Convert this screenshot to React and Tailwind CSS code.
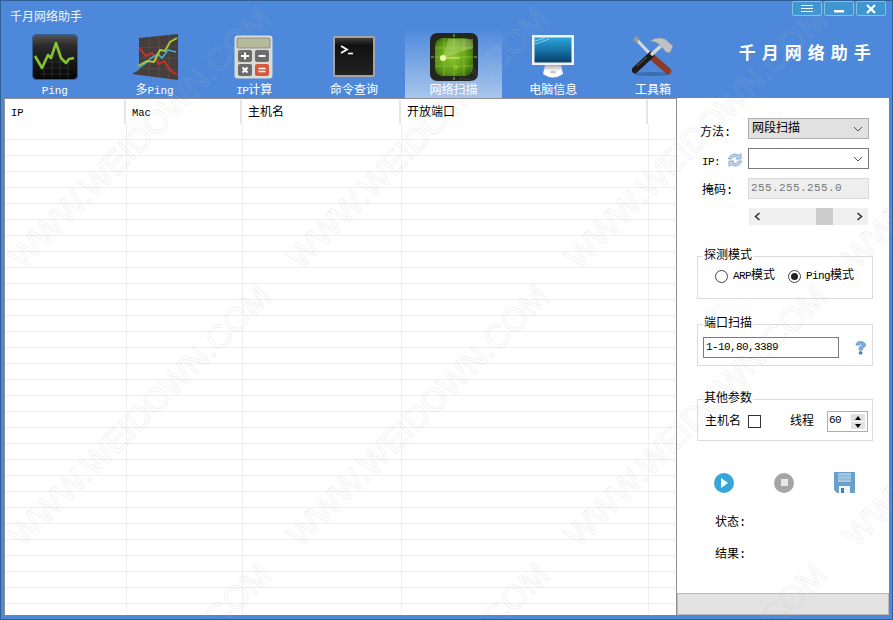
const ui = { fontFamily: '"Liberation Mono","Noto Sans CJK SC",monospace' }

function L({ children }){
  return <span className="text-[11px] tracking-[-0.6px]">{children}</span>
}

function PingIcon(){
  return (
    <svg width="46" height="46" viewBox="0 0 46 46">
      <defs>
        <linearGradient id="pg" x1="0" y1="0" x2="0" y2="1"><stop offset="0" stopColor="#555" /><stop offset="0.25" stopColor="#2a2a2a" /><stop offset="1" stopColor="#050505" /></linearGradient>
      </defs>
      <rect x="0.5" y="0.5" width="45" height="45" rx="4" fill="url(#pg)" stroke="#2f5f95" />
      <path d="M8 28H38M8 34H38M8 40H38M12 24V44M20 24V44M28 24V44M36 24V44" stroke="#3a3a3a" strokeWidth="0.6" />
      <path d="M3 22 L10 34 L16 21 L19 24 L24 9 L29 24 L34 29 L37 25 L42 24" fill="none" stroke="#86c232" strokeWidth="2.6" strokeLinejoin="round" />
    </svg>
  )
}

function MultiPingIcon(){
  return (
    <svg width="46" height="46" viewBox="0 0 46 46">
      <path d="M7 4 L46 0 V46 L0 40 L7 36Z" fill="#463e3b" />
      <path d="M7 14L46 12M7 24L46 24M7 34L46 36M17 4V42M27 3V43M37 1V45" stroke="#5d5450" strokeWidth="0.7" />
      <path d="M7 14 L14 22 L20 19 L27 30 L32 27 L38 36 L45 41" fill="none" stroke="#c9302c" strokeWidth="2" />
      <path d="M7 34 L14 29 L19 24 L26 20 L30 24 L36 16 L44 18" fill="none" stroke="#3fb6d6" strokeWidth="1.5" />
      <path d="M6 32 L15 27 L22 28 L28 16 L33 17 L38 8 L45 4" fill="none" stroke="#a3c93a" strokeWidth="2" />
    </svg>
  )
}

function CalcIcon(){
  return (
    <svg width="40" height="44" viewBox="0 0 40 44">
      <rect x="0.5" y="0.5" width="38" height="43" rx="3" fill="#d9dcd6" />
      <rect x="3" y="3" width="33" height="10" rx="1" fill="#b5bb9b" stroke="#777" strokeWidth="0.7" />
      <rect x="4" y="15" width="14" height="12" rx="2" fill="#6c6c6c" />
      <rect x="21" y="15" width="14" height="12" rx="2" fill="#6c6c6c" />
      <rect x="4" y="29" width="14" height="12" rx="2" fill="#6c6c6c" />
      <rect x="21" y="29" width="14" height="12" rx="2" fill="#d9583c" />
      <path d="M7 21H15M11 17.500V24.500M24.500 21H31.500M8.500 32.500L13.500 37.500M13.500 32.500L8.500 37.500" stroke="#fff" strokeWidth="2" />
      <path d="M24.500 33.500H31.500M24.500 36.500H31.500" stroke="#fff" strokeWidth="1.500" />
    </svg>
  )
}

function TermIcon(){
  return (
    <svg width="42" height="41" viewBox="0 0 42 41">
      <defs>
        <linearGradient id="tg" x1="0" y1="0" x2="0" y2="1"><stop offset="0" stopColor="#3c3c3c" /><stop offset="0.2" stopColor="#111" /><stop offset="1" stopColor="#222" /></linearGradient>
      </defs>
      <rect x="0" y="0" width="42" height="41" rx="2" fill="#a7a29b" />
      <rect x="2" y="2" width="38" height="37" fill="url(#tg)" />
      <path d="M8 10L14 13.500L8 17" fill="none" stroke="#fff" strokeWidth="1.800" />
      <path d="M15 17.500H20" stroke="#fff" strokeWidth="1.600" />
    </svg>
  )
}

function RadarIcon(){
  return (
    <svg width="48" height="48" viewBox="0 0 48 48">
      <defs>
        <radialGradient id="rg" cx="0.45" cy="0.5" r="0.7"><stop offset="0" stopColor="#8cc62c" /><stop offset="0.6" stopColor="#5d9a16" /><stop offset="1" stopColor="#2a5208" /></radialGradient>
      </defs>
      <rect x="0" y="0" width="48" height="48" rx="7" fill="#24261f" />
      <rect x="5" y="5" width="38" height="38" rx="8" fill="url(#rg)" />
      <path d="M5 15H43M5 24H43M5 33H43M14 5V43M24 5V43M34 5V43" stroke="#9ccb3c" strokeWidth="0.6" />
      <path d="M13 25L43 15V6H18Z" fill="#d5e6a0" opacity="0.35" />
      <path d="M13 25H30" stroke="#d9f08a" strokeWidth="1" />
      <circle cx="13" cy="25" r="3" fill="#eefaa8" />
      <circle cx="26" cy="34" r="2" fill="#8ecb2a" />
      <circle cx="22" cy="12" r="1.500" fill="#8ecb2a" />
      <path d="M24 1V4M24 44V47M1 24H4M44 24H47" stroke="#5c9a1c" strokeWidth="1.500" />
    </svg>
  )
}

function MonitorIcon(){
  return (
    <svg width="44" height="44" viewBox="0 0 44 44">
      <defs>
        <linearGradient id="mg" x1="0" y1="0" x2="0" y2="1"><stop offset="0" stopColor="#2ba6de" /><stop offset="1" stopColor="#07406f" /></linearGradient>
        <linearGradient id="sg" x1="0" y1="0" x2="0" y2="1"><stop offset="0" stopColor="#aaa" /><stop offset="0.5" stopColor="#fff" /></linearGradient>
      </defs>
      <rect x="1" y="0" width="42" height="30" fill="#f1f3f4" />
      <rect x="3.500" y="2.500" width="37" height="25" fill="url(#mg)" />
      <path d="M4 6L14 3M4 9L18 4" stroke="#a8dcf3" strokeWidth="0.8" />
      <path d="M14 30H30L32 39Q22 46 12 39Z" fill="url(#sg)" />
      <ellipse cx="22" cy="37" rx="3" ry="1.500" fill="#ccc" />
    </svg>
  )
}

function ToolsIcon(){
  return (
    <svg width="42" height="42" viewBox="0 0 42 42" fill="none">
      <ellipse cx="20" cy="38" rx="18" ry="2" fill="#2b4f80" opacity="0.5" />
      <path d="M4 3L19 19" stroke="#d4d7d9" strokeWidth="3.200" />
      <path d="M1 4L4 0L7 3L5 7Z" fill="#9a9d9f" />
      <path d="M20 21L36 35" stroke="#8c3b2a" strokeWidth="6.500" strokeLinecap="round" />
      <path d="M19 19L3 34" stroke="#1c1c1c" strokeWidth="6.500" strokeLinecap="round" />
      <path d="M15 21L5 30" stroke="#666" strokeWidth="1" />
      <path d="M19 19L30 9" stroke="#d2d5d7" strokeWidth="3.600" />
      <path d="M18 5Q25 0 33 3L41 10L38 17L34 16L29 10Q24 5 18 5Z" fill="#bfc2c4" stroke="#8a8a8a" strokeWidth="0.5" />
    </svg>
  )
}

function RefreshIcon(){
  return (
    <svg width="16" height="16" viewBox="0 0 16 16" fill="#c3d6ee" stroke="#86a9d6" strokeWidth="1">
      <path d="M1.500 7C2.500 2.500 8 .500 12 3.500L14 1.500V7H9L10.800 5.200C8.500 3.800 5.500 4.500 4.500 7Z" />
      <path d="M14.500 9C13.500 13.500 8 15.500 4 12.500L2 14.500V9H7L5.200 10.800C7.500 12.200 10.500 11.500 11.500 9Z" />
    </svg>
  )
}

function HelpIcon(){
  return (
    <svg width="11" height="14" viewBox="0 0 11 14">
      <path d="M1 4C1 1.500 3 .500 5.500 .500C8.500 .500 10.500 2 10.500 4C10.500 6 8.500 6.500 7.500 7.500V9H4V7C4 5.500 7 5 7 3.800C7 2.800 5 2.800 4.500 4.200Z" fill="#7fb0e0" stroke="#4f82b8" strokeWidth="0.6" />
      <rect x="3.800" y="10.200" width="3.600" height="3.300" rx="1.200" fill="#4f82b8" />
    </svg>
  )
}

function Chevron(){
  return (
    <svg width="10" height="6" viewBox="0 0 10 6" fill="none" stroke="#555" strokeWidth="1"><path d="M1 1L5 5L9 1" /></svg>
  )
}

const tabs = [
  { key: 'ping', name: <span className="text-[11px] tracking-[-0.1px]">Ping</span>, icon: <PingIcon /> },
  { key: 'multi', name: <>多<span className="text-[11px] tracking-[-0.1px]">Ping</span></>, icon: <MultiPingIcon /> },
  { key: 'calc', name: <><L>IP</L>计算</>, icon: <CalcIcon /> },
  { key: 'cmd', name: '命令查询', icon: <TermIcon /> },
  { key: 'scan', name: '网络扫描', icon: <RadarIcon />, active: true },
  { key: 'info', name: '电脑信息', icon: <MonitorIcon /> },
  { key: 'tools', name: '工具箱', icon: <ToolsIcon /> },
]

function Toolbar(){
  return (
    <div className="flex items-end h-[70px] pl-[3px]">
      <div className="flex h-full">
        {tabs.map((t)=> (
          <div key={t.key} className="w-[99.7px] h-full pl-[2px]">
            <div className={`h-full flex flex-col items-center ${t.active ? 'bg-gradient-to-b from-[#4d88db] to-[#a8c6ec]' : ''}`}>
              <div className="h-[57px] flex items-center justify-center pt-[1px]">{t.icon}</div>
              <div className="text-white text-[12px] leading-[14px]">{t.name}</div>
            </div>
          </div>
        ))}
      </div>
      <div className="flex-1 self-start pt-[15px] pl-[37px] text-white font-bold text-[17px] leading-[24px] tracking-[6px] whitespace-nowrap">千月网络助手</div>
    </div>
  )
}

function WinButton({ children }){
  return (
    <div className="w-[30px] h-[15px] rounded-[2px] border border-[#7cc6d8] bg-[#3f95d0] flex items-center justify-center">{children}</div>
  )
}

function TitleBar(){
  return (
    <div className="h-[27px] flex justify-between pl-[9px] pr-[6px]">
      <div className="text-[#f0f4fa] text-[12px] leading-[14px] pt-[8px]" style={{ fontFamily: '"Noto Sans CJK SC",sans-serif' }}>千月网络助手</div>
      <div className="flex gap-[2px]">
        <WinButton>
          <svg width="14" height="8" viewBox="0 0 14 8" stroke="#fff"><path d="M1 .5H13M1 3.500H13M1 6.500H13" /></svg>
        </WinButton>
        <WinButton>
          <svg width="12" height="10" viewBox="0 0 12 10"><rect x="1" y="6" width="10" height="2.500" fill="#fff" /></svg>
        </WinButton>
        <WinButton>
          <svg width="12" height="10" viewBox="0 0 12 10" stroke="#fff" strokeWidth="2.200"><path d="M2 1L10 9M10 1L2 9" /></svg>
        </WinButton>
      </div>
    </div>
  )
}

const columns = [
  { name: 'IP', w: 'w-[121px]', size: 'text-[10.500px]' },
  { name: 'Mac', w: 'w-[116px]', size: 'text-[10.500px]' },
  { name: '主机名', w: 'w-[159px]', size: 'text-[12px]' },
  { name: '开放端口', w: 'w-[247px]', size: 'text-[12px]' },
  { name: '', w: 'flex-1', size: 'text-[12px]' },
]

function TableRow({ className }){
  return (
    <div className={`flex border-[#efefef] ${className}`}>
      <div className="w-[122px] border-r border-[#efefef]" />
      <div className="w-[116px] border-r border-[#efefef]" />
      <div className="w-[159px] border-r border-[#efefef]" />
      <div className="w-[247px] border-r border-[#efefef]" />
    </div>
  )
}

function Table(){
  const rows = Array.from({ length: 29 })
  return (
    <div className="w-[673px] shrink-0 h-full bg-white border-l border-t border-r border-[#8f8f8f] overflow-hidden">
      <div className="flex h-[25px] pt-px">
        {columns.map((c,i)=> (
          <div key={i} className={`${c.w} ${c.size} h-full leading-[27px] pl-[6px] text-black border-r-2 border-[#e6e6e6] last:border-r-0`}>{c.name}</div>
        ))}
      </div>
      <TableRow className="h-[15px]" />
      {rows.map((_,i)=> <TableRow key={i} className="h-[16px] border-t" />)}
      <TableRow className="h-[11px] border-t" />
    </div>
  )
}

function Group({ title, className, children }){
  return (
    <div className={`relative mx-[20px] w-[176px] border border-[#dcdcdc] ${className}`}>
      <div className="absolute -top-[9px] left-[5px] bg-white px-px text-[12px] leading-[16px] text-black">{title}</div>
      {children}
    </div>
  )
}

function Radio({ checked, label }){
  return (
    <div className="flex items-center gap-[5px] text-[12px] text-black">
      <div className="w-[13px] h-[13px] rounded-full border border-[#444] bg-white flex items-center justify-center">
        {checked && <div className="w-[7px] h-[7px] rounded-full bg-[#222]" />}
      </div>
      <span>{label}</span>
    </div>
  )
}

function SidePanel(){
  return (
    <div className="flex-1 min-w-0 h-full flex flex-col bg-white text-black">
      <div className="flex-1 pt-[20px]">
        <div className="flex items-center h-[21px] pl-[23px]">
          <div className="w-[48px] text-[12px] pt-[9px]">方法:</div>
          <div className="w-[121px] h-[21px] bg-[#e1e1e1] border border-[#adadad] flex items-center justify-between pl-[3px] pr-[5px] text-[12px]">网段扫描<Chevron /></div>
        </div>
        <div className="flex items-center h-[21px] mt-[9px] pl-[25px]">
          <div className="w-[25px] pt-[5px]"><L>IP:</L></div>
          <div className="w-[21px] pt-[3px]"><RefreshIcon /></div>
          <div className="w-[121px] h-[21px] bg-white border border-[#7a7a7a] flex items-center justify-end pr-[5px]"><Chevron /></div>
        </div>
        <div className="flex items-center h-[21px] mt-[9px] pl-[25px]">
          <div className="w-[46px] text-[12px] pt-[4px]">掩码:</div>
          <div className="w-[121px] h-[21px] bg-[#eeeeee] border border-[#d9d9d9] flex items-center pl-[2px] text-[11px] tracking-[0.4px] text-[#777]">255.255.255.0</div>
        </div>
        <div className="flex items-center w-[119px] h-[17px] ml-[72px] mt-[9px] bg-[#f0f0f0] px-[5px]">
          <svg width="7" height="9" viewBox="0 0 7 9" fill="none" stroke="#333" strokeWidth="1.600"><path d="M5.500 1L1.500 4.500L5.500 8" /></svg>
          <div className="w-[17px] h-[17px] bg-[#cdcdcd] ml-[55px]" />
          <svg className="ml-auto" width="7" height="9" viewBox="0 0 7 9" fill="none" stroke="#333" strokeWidth="1.600"><path d="M1.500 1L5.500 4.500L1.500 8" /></svg>
        </div>
        <Group title="探测模式" className="h-[43px] mt-[31px]">
          <div className="flex items-center gap-[13px] pl-[17px] pt-[10px]">
            <Radio label={<><L>ARP</L>模式</>} />
            <Radio checked label={<><L>Ping</L>模式</>} />
          </div>
        </Group>
        <Group title="端口扫描" className="h-[42px] mt-[25px]">
          <div className="flex items-center pl-[5px] pt-[12px]">
            <div className="w-[136px] h-[21px] border border-[#7a7a7a] flex items-center pl-[2px]"><L>1-10,80,3389</L></div>
            <div className="ml-[16px] flex"><HelpIcon /></div>
          </div>
        </Group>
        <Group title="其他参数" className="h-[42px] mt-[33px]">
          <div className="flex items-center pl-[7px] pt-[11px] text-[12px]">
            <span className="w-[43px]">主机名</span>
            <div className="w-[13px] h-[13px] border border-[#333] bg-white" />
            <span className="ml-[29px] w-[37px]">线程</span>
            <div className="w-[41px] h-[21px] border border-[#adadad] flex justify-between pl-px pr-[2px] py-[2px] leading-[12px]">
              <L>60</L>
              <div className="w-[14px] flex flex-col gap-px">
                <div className="flex-1 bg-[#e1e1e1] flex items-center justify-center"><div className="w-0 h-0 border-x-[3px] border-x-transparent border-b-[4px] border-b-black" /></div>
                <div className="flex-1 bg-[#e1e1e1] flex items-center justify-center"><div className="w-0 h-0 border-x-[3px] border-x-transparent border-t-[4px] border-t-black" /></div>
              </div>
            </div>
          </div>
        </Group>
        <div className="flex items-center pl-[37px] gap-[40px] mt-[31px]">
          <div className="w-[20px] h-[20px] rounded-full bg-[#35a6d8] flex items-center justify-center">
            <div className="w-0 h-0 ml-px border-y-[5px] border-y-transparent border-l-[7px] border-l-white" />
          </div>
          <div className="w-[20px] h-[20px] rounded-full bg-[#a5a5a5] flex items-center justify-center">
            <div className="w-[7px] h-[7px] bg-[#e8e8e8]" />
          </div>
          <svg width="21" height="21" viewBox="0 0 21 21">
            <path d="M0 0H21V21H3L0 18Z" fill="#6a9fcb" />
            <rect x="4" y="1" width="13" height="9" fill="#a6c8e2" />
            <path d="M4 4H17M4 7H17" stroke="#7fb0d4" />
            <rect x="5" y="14" width="11" height="7" fill="#f2f6f9" />
            <rect x="7" y="16" width="3" height="5" fill="#3f7fb3" />
          </svg>
        </div>
        <div className="pl-[38px] mt-[22px] text-[12px] leading-[16px]">状态:</div>
        <div className="pl-[38px] mt-[16px] text-[12px] leading-[16px]">结果:</div>
      </div>
      <div className="h-[22px] bg-[#e3e3e3] border border-[#bbbbbb]" />
    </div>
  )
}

function Watermarks(){
  const spots = []
  for (let r = 0; r < 3; r++) {
    for (let c = 0; c < 4; c++) {
      spots.push({ x: 139 + c * 278, y: 137 + r * 278 })
    }
  }
  return (
    <div className="absolute inset-0 overflow-hidden pointer-events-none">
      {spots.map((s,i)=> (
        <div key={i} className="absolute w-[360px] -ml-[180px] -mt-[19px] text-center whitespace-nowrap -rotate-45 text-[33px] leading-[38px] text-transparent [-webkit-text-stroke:1px_rgba(185,185,185,0.2)]" style={{ left: s.x, top: s.y, fontFamily: '"Liberation Sans",sans-serif' }}>WWW.WEIDOWN.COM</div>
      ))}
    </div>
  )
}

export default function App(){
  return (
    <div className="relative w-[893px] h-[620px] overflow-hidden bg-[#4d88db] border border-[#2f5f95] flex flex-col" style={ui}>
      <TitleBar />
      <Toolbar />
      <div className="flex h-[517px] shrink-0 mx-[3px]">
        <Table />
        <SidePanel />
      </div>
      <Watermarks />
    </div>
  )
}
